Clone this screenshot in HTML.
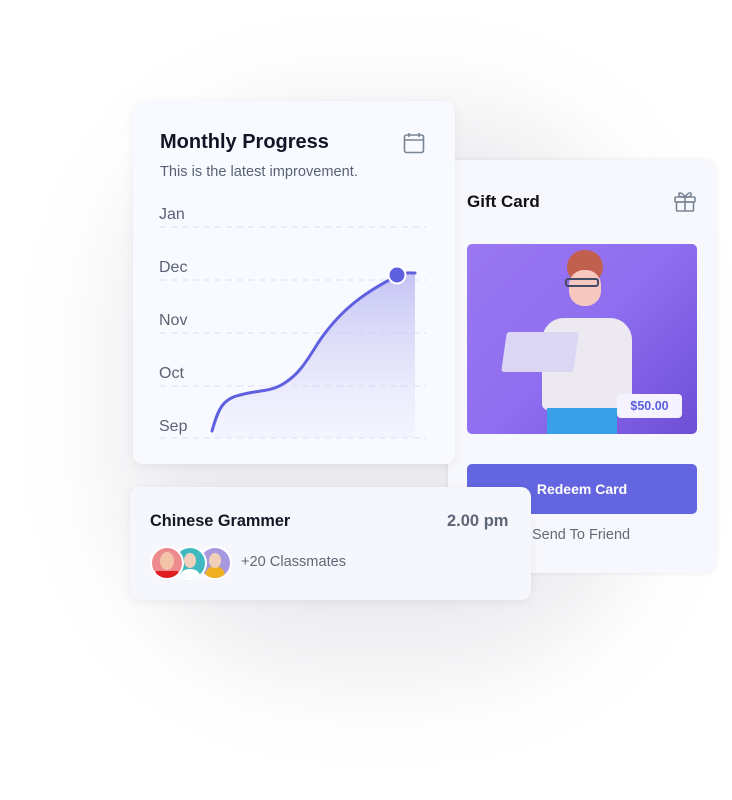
<!DOCTYPE html>
<html><head><style>
body{margin:0;width:732px;height:800px;background:#fff;font-family:"Liberation Sans",sans-serif;position:relative;overflow:hidden}
.card{position:absolute;background:#f9faff;border-radius:10px}
.t{position:absolute;white-space:nowrap}
</style></head><body>
<div style="position:absolute;left:120px;top:110px;width:520px;height:560px;border-radius:200px;background:rgba(60,60,90,0.10);filter:blur(50px)"></div>

<div class="card" style="left:448px;top:160px;width:268px;height:413px;background:#f7f8fd;box-shadow:0 0 6px rgba(0,0,0,0.08)">
 <div class="t" style="left:19px;top:32px;font-size:17px;font-weight:bold;color:#111">Gift Card</div>
 <svg style="position:absolute;left:225px;top:30px" width="24" height="22" viewBox="0 0 24 22" fill="none" stroke="#7a8594" stroke-width="1.6"><rect x="2" y="7" width="20" height="5" rx="1"/><rect x="3.5" y="12" width="17" height="9" rx="1"/><path d="M12 7v14M12 7C9 2 5 2 6 5s6 2 6 2M12 7c3-5 7-5 6-2s-6 2-6 2"/></svg>
 <div style="position:absolute;left:19px;top:84px;width:230px;height:190px;border-radius:5px;background:linear-gradient(135deg,#9a78f2,#8f6ef0 50%,#6d4fd6);overflow:hidden">
  <div style="position:absolute;left:100px;top:6px;width:36px;height:34px;border-radius:18px;background:#c2604f"></div>
  <div style="position:absolute;left:102px;top:26px;width:32px;height:36px;border-radius:15px;background:#f7c8c0"></div>
  <div style="position:absolute;left:98px;top:34px;width:34px;height:9px;border:2px solid #444b66;border-radius:3px;box-sizing:border-box"></div>
  <div style="position:absolute;left:75px;top:74px;width:90px;height:92px;border-radius:22px 22px 6px 6px;background:#ece9f1"></div>
  <div style="position:absolute;left:80px;top:164px;width:70px;height:26px;background:#3aa0e8"></div>
  <div style="position:absolute;left:37px;top:88px;width:72px;height:40px;background:#dcd6f5;border-radius:3px;transform:skewX(-8deg)"></div>
  <div style="position:absolute;left:150px;top:150px;width:65px;height:24px;background:#f4f3ff;border-radius:4px;color:#5b5fdc;font-size:12.5px;font-weight:bold;text-align:center;line-height:24px">$50.00</div>
 </div>
 <div style="position:absolute;left:19px;top:304px;width:230px;height:50px;border-radius:5px;background:#6366e0;color:#fff;font-size:14px;font-weight:bold;text-align:center;line-height:50px">Redeem Card</div>
 <div class="t" style="left:84px;top:367px;font-size:14.5px;color:#626b7a">Send To Friend</div>
</div>

<div class="card" style="left:133px;top:101px;width:322px;height:363px;box-shadow:0 2px 10px rgba(0,0,0,0.06)">
 <div class="t" style="left:27px;top:30px;font-size:20px;font-weight:bold;color:#111526">Monthly Progress</div>
 <div class="t" style="left:27px;top:63px;font-size:14.6px;color:#586273">This is the latest improvement.</div>
 <svg style="position:absolute;left:270px;top:31px" width="22" height="22" viewBox="0 0 22 22" fill="none" stroke="#7a8594" stroke-width="1.6"><rect x="1.5" y="3" width="19" height="17.5" rx="2"/><path d="M1.5 8h19M6 1v4M16 1v4"/></svg>
</div>
<svg style="position:absolute;left:0;top:0" width="732" height="800">
 <defs><linearGradient id="g" x1="0" y1="0" x2="0" y2="1"><stop offset="0" stop-color="#b7b5f2" stop-opacity=".8"/><stop offset="1" stop-color="#e8e8fb" stop-opacity=".3"/></linearGradient></defs>
 <g stroke="#e6e6fa" stroke-width="1.5" stroke-dasharray="6 5"><path d="M160 227H426M160 280H426M160 333H426M160 386H426M160 438H426"/></g>
 <path d="M212 431 C218 410 222 399 240 395 C258 390 270 392 283 384 C298 375 305 364 318 343 C340 310 365 292 397 276 C405 272 410 273 415 273 L415 438 L212 438Z" fill="url(#g)"/>
 <path d="M212 431 C218 410 222 399 240 395 C258 390 270 392 283 384 C298 375 305 364 318 343 C340 310 365 292 397 276 C405 272 410 273 415 273" fill="none" stroke="#5f60df" stroke-width="3" stroke-linecap="round"/>
 <circle cx="397" cy="275" r="8.5" fill="#5f60df" stroke="#fff" stroke-width="2"/>
 <g font-family="Liberation Sans" font-size="16" fill="#5a6374"><text x="159" y="219">Jan</text><text x="159" y="272">Dec</text><text x="159" y="325">Nov</text><text x="159" y="378">Oct</text><text x="159" y="431">Sep</text></g>
</svg>

<div class="card" style="left:130px;top:487px;width:401px;height:113px;background:#f6f7fc;box-shadow:0 2px 10px rgba(0,0,0,0.06)">
 <div class="t" style="left:20px;top:25px;font-size:16.3px;font-weight:bold;color:#141826">Chinese Grammer</div>
 <div class="t" style="left:317px;top:25px;font-size:16.5px;font-weight:bold;color:#5d6676">2.00 pm</div>
 <div style="position:absolute;left:68px;top:59px;width:30px;height:30px;border-radius:50%;background:#a898e0;border:2px solid #fff;overflow:hidden"><div style="position:absolute;left:5px;top:18px;width:20px;height:14px;border-radius:10px 10px 0 0;background:#f0b020"></div><div style="position:absolute;left:9px;top:5px;width:12px;height:15px;border-radius:50%;background:#f1d0b8"></div></div>
 <div style="position:absolute;left:43px;top:59px;width:30px;height:30px;border-radius:50%;background:#3fb8c0;border:2px solid #fff;overflow:hidden"><div style="position:absolute;left:9px;top:5px;width:12px;height:15px;border-radius:50%;background:#f3d0bc"></div><div style="position:absolute;left:4px;top:21px;width:22px;height:12px;border-radius:10px 10px 0 0;background:#fff"></div></div>
 <div style="position:absolute;left:20px;top:59px;width:30px;height:30px;border-radius:50%;background:#ee8b8f;border:2px solid #fff;overflow:hidden"><div style="position:absolute;left:8px;top:4px;width:14px;height:18px;border-radius:50%;background:#f3c4a8"></div><div style="position:absolute;left:4px;top:23px;width:22px;height:10px;background:#e02020"></div></div>
 <div class="t" style="left:111px;top:67px;font-size:14.6px;color:#5f6878">+20 Classmates</div>
</div>
</body></html>
